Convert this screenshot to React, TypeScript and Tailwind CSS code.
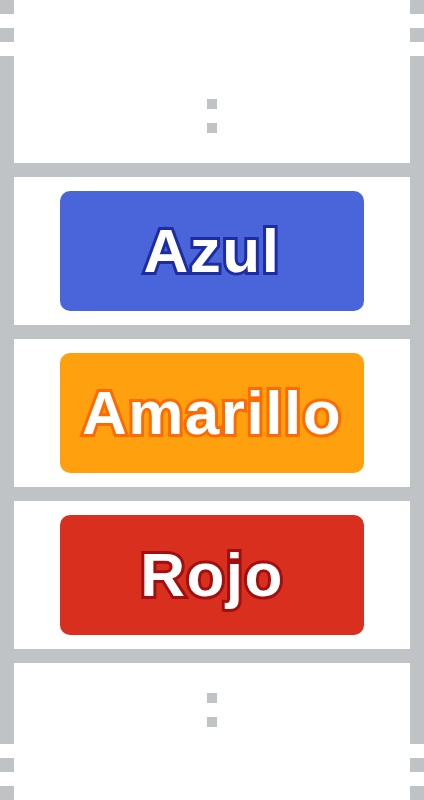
import React from "react";

const G = "bg-[#bfc3c6]";

function Rail() {
  return (
    <div className="flex w-[14px] shrink-0 flex-col">
      <div className={`h-[14px] ${G}`} />
      <div className="h-[14px]" />
      <div className={`h-[14px] ${G}`} />
      <div className="h-[14px]" />
      <div className={`flex-1 ${G}`} />
      <div className="h-[14px]" />
      <div className={`h-[14px] ${G}`} />
      <div className="h-[14px]" />
      <div className={`h-[14px] ${G}`} />
    </div>
  );
}

function Dots() {
  return (
    <div className="flex flex-col items-center gap-[14px]">
      <div className={`h-[10px] w-[10px] ${G}`} />
      <div className={`h-[10px] w-[10px] ${G}`} />
    </div>
  );
}

function Bar() {
  return <div className={`h-[14px] ${G}`} />;
}

function Card({ label, bg, stroke }: { label: string; bg: string; stroke: string }) {
  return (
    <div className="flex h-[148px] items-center justify-center px-[46px]">
      <div className={`flex h-[120px] w-full items-center justify-center rounded-[10px] ${bg}`}>
        <span
          className="font-['Liberation_Sans',Arial,sans-serif] text-[62px] font-bold leading-none tracking-[1.5px] text-white [paint-order:stroke_fill] [stroke-linejoin:round]"
          style={{ WebkitTextStroke: `6px ${stroke}` }}
        >
          {label}
        </span>
      </div>
    </div>
  );
}

export default function App() {
  return (
    <div className="flex h-[800px] w-[424px] bg-white">
      <Rail />
      <div className="flex flex-1 flex-col">
        <div className="h-[163px] pt-[99px]">
          <Dots />
        </div>
        <Bar />
        <Card label="Azul" bg="bg-[#4a64d9]" stroke="#1c2ca3" />
        <Bar />
        <Card label="Amarillo" bg="bg-[#ffa00f]" stroke="#ff6a00" />
        <Bar />
        <Card label="Rojo" bg="bg-[#d92f1e]" stroke="#a30f0f" />
        <Bar />
        <div className="h-[137px] pt-[30px]">
          <Dots />
        </div>
      </div>
      <Rail />
    </div>
  );
}
